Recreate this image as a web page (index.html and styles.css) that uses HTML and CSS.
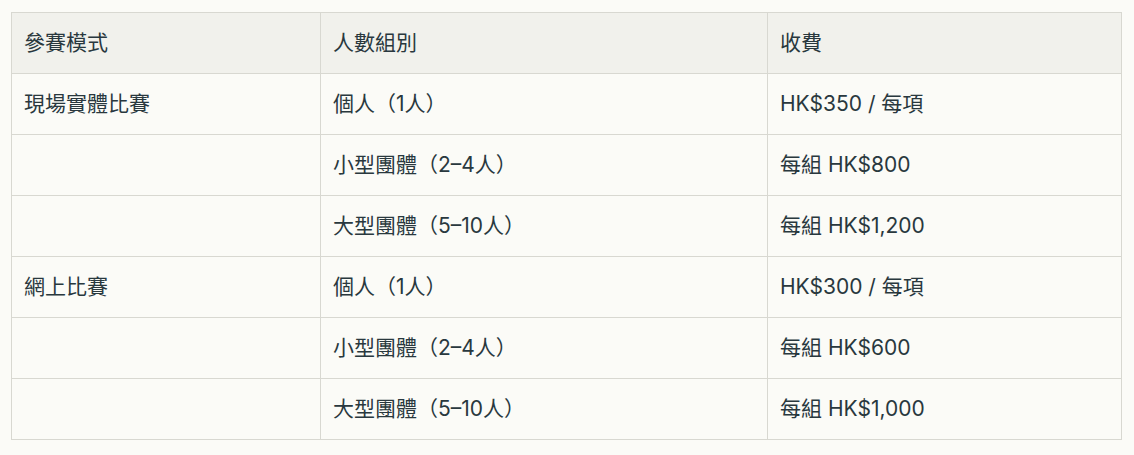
FILE: index.html
```html
<!DOCTYPE html>
<html lang="zh-Hant">
<head>
<meta charset="utf-8">
<link rel="stylesheet" href="styles.css">
</head>
<body>
<div class="wrap">
<table class="fees">
<colgroup><col class="c1"><col class="c2"><col class="c3"></colgroup>
<thead>
<tr><th>參賽模式</th><th>人數組別</th><th>收費</th></tr>
</thead>
<tbody>
<tr><td>現場實體比賽</td><td>個人（1人）</td><td>HK$350 / 每項</td></tr>
<tr><td></td><td>小型團體（2–4人）</td><td>每組 HK$800</td></tr>
<tr><td></td><td>大型團體（5–10人）</td><td>每組 HK$1,200</td></tr>
<tr><td>網上比賽</td><td>個人（1人）</td><td>HK$300 / 每項</td></tr>
<tr><td></td><td>小型團體（2–4人）</td><td>每組 HK$600</td></tr>
<tr><td></td><td>大型團體（5–10人）</td><td>每組 HK$1,000</td></tr>
</tbody>
</table>
</div>
</body>
</html>
```
FILE: styles.css
```css
html, body {
  margin: 0;
  padding: 0;
  background: #fbfbf7;
}
body {
  font-family: "Inter", "Noto Sans CJK TC", sans-serif;
  color: #29383e;
}
.wrap {
  padding: 12px 13px 0 11px;
}
.fees {
  width: 1110px;
  border-collapse: collapse;
  table-layout: fixed;
  font-size: 21px;
}
.fees th, .fees td {
  box-sizing: border-box;
  border: 1px solid #d8d8d1;
  padding: 0 12px;
  height: 61px;
  text-align: left;
  font-weight: 400;
  line-height: 26px;
  vertical-align: middle;
}
.fees thead th {
  background: #f1f1ec;
}
.c1 { width: 309px; }
.c2 { width: 447px; }
.c3 { width: 354px; }
```
